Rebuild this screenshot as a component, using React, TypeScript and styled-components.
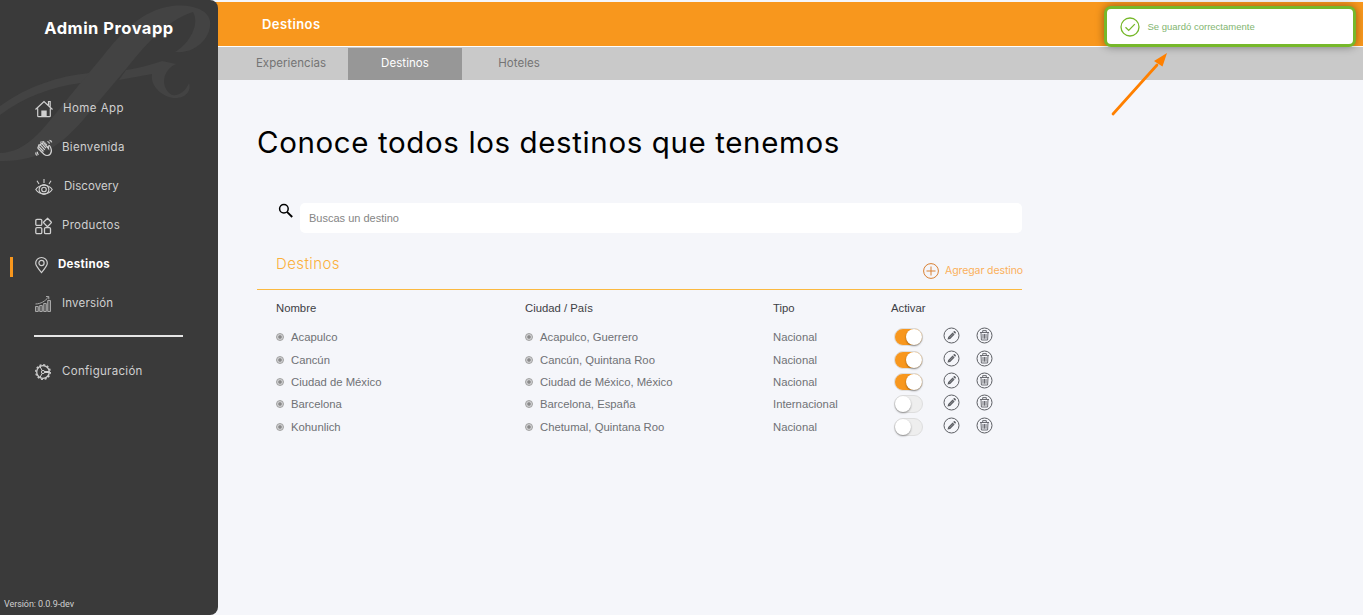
import { ReactNode, useState } from "react";
import styled, { createGlobalStyle } from "styled-components";

interface MenuItem {
  key: string;
  label: string;
  gap: number;
  spacing?: number;
  icon: ReactNode;
}

interface Destino {
  nombre: string;
  ciudad: string;
  tipo: string;
  activo: boolean;
}

const HomeIcon = () => (
  <MenuIcon viewBox="0 0 18 18" $stroke={1.2}>
    <path d="M.5 9.500 9 1.500l8.500 8M2.700 8.500v7.300c0 .6.3.9.9.9h10.800c.6 0 .9-.3.9-.9V8.500M13.500 5V1.500h1.700v5.200" />
    <path d="M6.300 10.500h5.400v6.200H6.300z" fill="#d0d0d0" stroke="none" />
  </MenuIcon>
);

const HandIcon = () => (
  <MenuIcon viewBox="0 0 18 18" $stroke={1.2}>
    <path d="M9 15.200c2 1.700 4.800 1.500 6.300-.2 1.400-1.600 1.400-3.500.7-5.500l-1-2.200c-.7-1.200-2-.6-1.700.6l.2 1.600L9 4.200C8 3.200 6.800 4 7.500 5.200M3.200 9.500 9 15.200M7.500 5.200l3.500 4M7.500 5.200C6.300 4 5 5 5.800 6.300l4 4.500M5.500 6.200C4.200 5.500 3.300 6.700 4.200 7.900l4.300 4.600M4.200 7.900c-1.200-.2-1.800.9-1 1.800" />
    <path d="M4 5.200 3.200 8M5 3.300l4-.8 3 3.500" strokeWidth=".9" />
    <path d="M12.300 2.500c1.300.1 2 .9 2.200 2.100M14.500 1.300c1.200.2 2 .9 2.200 2M2.500 12.700c-.4 1.300 0 2.200 1 3M1 13.500c-.4 1.300.100 2.400 1.300 3" />
  </MenuIcon>
);

const EyeIcon = () => (
  <MenuIcon viewBox="0 0 18 18" $stroke={1.1}>
    <path d="M.8 11.500C4.500 5.800 13.500 5.800 17.200 11.500 13.500 17.200 4.500 17.200.8 11.500z" />
    <circle cx="9" cy="11.500" r="4.900" />
    <circle cx="9" cy="11.500" r="2.300" />
    <path d="M9 1v4M2 2.800l2 3.200M16 2.800l-2 3.200" />
  </MenuIcon>
);

const GridIcon = () => (
  <MenuIcon viewBox="0 0 18 18" $stroke={1.3}>
    <rect x=".8" y="2.400" width="6" height="6" rx="1.200" />
    <rect x=".8" y="10.600" width="6" height="6" rx="1.200" />
    <rect x="9.500" y="10.600" width="6" height="6" rx="1.200" />
    <path d="m12.500 1.300 3.700 3.700c.3.3.3.6 0 .9l-3.300 3.300c-.3.3-.6.3-.9 0L8.700 5.900c-.3-.3-.3-.6 0-.9z" />
  </MenuIcon>
);

const PinIcon = () => (
  <MenuIcon viewBox="0 0 18 18" $stroke={1.2}>
    <path d="M6.500 16.600C3 12.500.700 9.700.700 7.300a5.800 5.800 0 0 1 11.600 0c0 2.400-2.300 5.200-5.800 9.300z" />
    <circle cx="6.500" cy="7" r="2.600" />
  </MenuIcon>
);

const ChartIcon = () => (
  <MenuIcon viewBox="0 0 18 18">
    <g stroke="#a8a8a8">
      <path d="M.5 16.500v-5h2.800v5zM4.700 16.500v-6h2.600v6zM8.700 16.500V8.500h2.600v8zM12.700 16.500v-11h2.800v11z" fill="#5c5c5c" />
      <path d="M.5 9C6 8.800 10 6.300 13.500 2M11 1.500h2.800v2.800" />
    </g>
  </MenuIcon>
);

const GearIcon = () => (
  <MenuIcon viewBox="0 0 18 18">
    <circle cx="8" cy="9" r="6.300" strokeWidth="1.300" />
    <circle cx="8" cy="9" r="7.300" strokeWidth="1.300" strokeDasharray="2 1.822" />
    <circle cx="8" cy="9" r="1.600" />
    <path d="M9.500 8.500h5M9.500 9.500h5M7.200 7.600 5 3.600M7.200 10.400 5 14.400" />
  </MenuIcon>
);

const SearchIcon = () => (
  <svg width="16" height="16" viewBox="0 0 16 16" fill="none" stroke="#000">
    <circle cx="5.900" cy="5.700" r="4.300" strokeWidth="1.500" />
    <path d="m9 8.800 5.200 5.200" strokeWidth="1.900" />
  </svg>
);

const AddIcon = () => (
  <svg width="16" height="16" viewBox="0 0 16 16" fill="none" stroke="#d98032" strokeWidth="1">
    <circle cx="8" cy="8" r="7.400" />
    <path d="M8 3.500v9M3.500 8h9" />
  </svg>
);

const EditIcon = () => (
  <svg width="17" height="17" viewBox="0 0 17 17" fill="none">
    <circle cx="8.500" cy="8.500" r="7.500" stroke="#5d5f64" />
    <path d="m4.500 12.600.700-2.700 4.400-4.400 2 2-4.400 4.400zM10.200 4.900l.800-.800c.6-.5 2.400 1.200 1.900 1.900l-.800.800z" fill="#5d5f64" />
    <path d="m6.500 10.700 3.500-3.500" stroke="#b5b6ba" strokeWidth=".5" />
  </svg>
);

const TrashIcon = () => (
  <svg width="17" height="17" viewBox="0 0 17 17" fill="none" stroke="#5d5f64">
    <circle cx="8.500" cy="8.500" r="7.500" />
    <path d="M4 5.500h9M6.700 5.300V3.600h3.600v1.700M5 5.700l.4 7.300h6.200l.4-7.300M7 7v4.700M8.500 7v4.700M10 7v4.700" strokeWidth=".9" />
  </svg>
);

const CheckIcon = () => (
  <svg width="20" height="20" viewBox="0 0 20 20" fill="none" stroke="#76b82a" strokeWidth="1.300">
    <circle cx="10" cy="10" r="9" />
    <path d="m5.500 10.200 3.200 3.200 6.100-6.300" />
  </svg>
);

const MENU: MenuItem[] = [
  { key: "home", label: "Home App", gap: 10, spacing: 0.45, icon: <HomeIcon /> },
  { key: "bienvenida", label: "Bienvenida", gap: 9, icon: <HandIcon /> },
  { key: "discovery", label: "Discovery", gap: 11, spacing: 0.05, icon: <EyeIcon /> },
  { key: "productos", label: "Productos", gap: 9, icon: <GridIcon /> },
  { key: "destinos", label: "Destinos", gap: 6, icon: <PinIcon /> },
  { key: "inversion", label: "Inversión", gap: 9, spacing: 0.2, icon: <ChartIcon /> },
];

const TABS = ["Experiencias", "Destinos", "Hoteles"];

const DESTINOS: Destino[] = [
  { nombre: "Acapulco", ciudad: "Acapulco, Guerrero", tipo: "Nacional", activo: true },
  { nombre: "Cancún", ciudad: "Cancún, Quintana Roo", tipo: "Nacional", activo: true },
  { nombre: "Ciudad de México", ciudad: "Ciudad de México, México", tipo: "Nacional", activo: true },
  { nombre: "Barcelona", ciudad: "Barcelona, España", tipo: "Internacional", activo: false },
  { nombre: "Kohunlich", ciudad: "Chetumal, Quintana Roo", tipo: "Nacional", activo: false },
];

function Sidebar() {
  return (
    <SideBox>
      <Swirl viewBox="0 0 218 170">
        <path d="M0 161C38 162 62 146 88 114L126 69C142 49 166 20 193 12 200 24 190 43 175 52 198 54 212 35 210 21 208 9 190 4 172 6 142 10 122 32 103 56L88 74C66 100 50 122 38 134 25 147 12 153 0 153z" />
        <path d="M0 106C28 86 58 76 90 73L81 83C50 87 22 98 0 115z" />
        <path d="M126 70 119 80 152 74C150 88 165 98 175 98 188 98 191 89 189 83 186 91 179 96 172 95 160 88 162 70 176 64L162 61C150 65 140 68 126 70z" />
      </Swirl>
      <Brand>Admin Provapp</Brand>
      <Menu>
        {MENU.map((item) => (
          <MenuRow key={item.key} $active={item.key === "destinos"} $gap={item.gap} $spacing={item.spacing}>
            {item.icon}
            <span>{item.label}</span>
          </MenuRow>
        ))}
      </Menu>
      <Divider />
      <MenuRow $gap={9}>
        <GearIcon />
        <span>Configuración</span>
      </MenuRow>
      <Version>Versión: 0.0.9-dev</Version>
    </SideBox>
  );
}

function App() {
  const [destinos, setDestinos] = useState(DESTINOS);
  const [search, setSearch] = useState("");

  const toggle = (nombre: string) => {
    setDestinos(destinos.map((d) => (d.nombre === nombre ? { ...d, activo: !d.activo } : d)));
  };

  const visible = destinos.filter((d) => d.nombre.toLowerCase().includes(search.toLowerCase()));

  return (
    <>
      <GlobalStyle />
      <Page>
        <Sidebar />
        <Main>
          <Header>Destinos</Header>
          <TabBar>
            {TABS.map((tab) => (
              <Tab key={tab} $active={tab === "Destinos"}>{tab}</Tab>
            ))}
          </TabBar>
          <Content>
            <Title>Conoce todos los destinos que tenemos</Title>
            <SearchRow>
              <SearchIcon />
              <SearchInput placeholder="Buscas un destino" value={search} onChange={(e) => setSearch(e.target.value)} />
            </SearchRow>
            <SectionHead>
              <SectionTitle>Destinos</SectionTitle>
              <AddButton>
                <AddIcon />
                <span>Agregar destino</span>
              </AddButton>
            </SectionHead>
            <TableHead>
              <span>Nombre</span>
              <span>Ciudad / País</span>
              <span>Tipo</span>
              <span>Activar</span>
            </TableHead>
            {visible.map((d) => (
              <TableRow key={d.nombre}>
                <Cell><Bullet />{d.nombre}</Cell>
                <Cell><Bullet />{d.ciudad}</Cell>
                <Cell>{d.tipo}</Cell>
                <Actions>
                  <Switch $on={d.activo} onClick={() => toggle(d.nombre)} />
                  <IconButton><EditIcon /></IconButton>
                  <IconButton><TrashIcon /></IconButton>
                </Actions>
              </TableRow>
            ))}
          </Content>
        </Main>
      </Page>
      <Toast>
        <CheckIcon />
        Se guardó correctamente
      </Toast>
      <Arrow viewBox="0 0 60 66">
        <path d="M4 62 48 13" stroke="#ff8000" strokeWidth="2.700" strokeLinecap="round" />
        <path d="M58 1 53.500 14.500 49.500 12 45 9z" fill="#ff8000" />
      </Arrow>
    </>
  );
}

export default App;

const GlobalStyle = createGlobalStyle`
  * {
    box-sizing: border-box;
  }

  body {
    margin: 0;
    background-color: #f5f6fa;
    font-family: Inter, "Liberation Sans", sans-serif;
    overflow: hidden;
  }

  button {
    padding: 0;
    border: none;
    background: none;
    font: inherit;
    cursor: pointer;
  }
`;

const Page = styled.div`
  display: flex;
  height: 615px;
`;

const SideBox = styled.aside`
  position: relative;
  display: flex;
  flex-direction: column;
  flex: none;
  width: 218px;
  height: 100%;
  background-color: #3a3a3a;
  border-radius: 0 8px 8px 0;
`;

const Swirl = styled.svg`
  position: absolute;
  top: 0;
  left: 0;
  width: 218px;
  height: 170px;
  fill: #434343;
`;

const Brand = styled.h1`
  position: relative;
  margin: 18px 0 50px;
  height: 20px;
  color: #ffffff;
  font-size: 16.5px;
  font-weight: 700;
  line-height: 20px;
  letter-spacing: 0.5px;
  text-align: center;
`;

const Menu = styled.nav`
  display: flex;
  flex-direction: column;
  position: relative;
`;

const MenuRow = styled.a<{ $active?: boolean; $gap: number; $spacing?: number }>`
  display: flex;
  align-items: center;
  gap: ${({ $gap }) => $gap}px;
  height: 39px;
  padding-left: ${({ $active }) => ($active ? 10 : 35)}px;
  color: ${({ $active }) => ($active ? "#ffffff" : "#d0d0d0")};
  font-size: 11.5px;
  font-weight: ${({ $active }) => ($active ? 700 : 400)};
  line-height: 14px;
  letter-spacing: ${({ $spacing = 0.3 }) => $spacing}px;
  cursor: pointer;

  &::before {
    content: "";
    display: ${({ $active }) => ($active ? "block" : "none")};
    width: 3px;
    height: 20px;
    margin: 6px 16px 0 0;
    background-color: #f8971d;
  }

  svg {
    margin-top: 2px;
    margin-right: ${({ $active }) => ($active ? -1 : 0)}px;
  }
`;

const MenuIcon = styled.svg<{ $stroke?: number }>`
  flex: none;
  width: 18px;
  height: 18px;
  fill: none;
  stroke: #d0d0d0;
  stroke-width: ${({ $stroke = 1 }) => $stroke};
`;

const Divider = styled.hr`
  width: 149px;
  height: 2px;
  margin: 13px 0 14px 34px;
  border: none;
  background-color: #e6e6e6;
`;

const Version = styled.p`
  margin: auto 0 5px 4px;
  color: #d0d0d0;
  font-family: Roboto, sans-serif;
  font-size: 9px;
  line-height: 12px;
  letter-spacing: -0.07px;
`;

const Main = styled.main`
  flex: 1;
  padding-top: 2px;
`;

const Header = styled.header`
  height: 45px;
  margin-left: -8px;
  padding: 13px 52px;
  border-bottom: 1px solid #ffffff;
  background-color: #f8971d;
  color: #ffffff;
  font-size: 13px;
  font-weight: 600;
  line-height: 19px;
  letter-spacing: 0.4px;
`;

const TabBar = styled.div`
  display: flex;
  height: 33px;
  padding: 1px 0 0 16px;
  background-color: #c9c9c9;
`;

const Tab = styled.button<{ $active: boolean }>`
  width: 114px;
  height: 32px;
  padding-bottom: 2px;
  background-color: ${({ $active }) => ($active ? "#979797" : "transparent")};
  color: ${({ $active }) => ($active ? "#ffffff" : "#747474")};
  font-size: 11.5px;
  letter-spacing: 0.05px;
`;

const Content = styled.section`
  width: 765px;
  margin-left: 39px;
`;

const Title = styled.h2`
  margin: 0;
  padding: 43px 0 42px;
  color: #000000;
  font-size: 29.5px;
  font-weight: 400;
  line-height: 38px;
  letter-spacing: 0.62px;
  white-space: nowrap;
`;

const SearchRow = styled.div`
  display: flex;
  gap: 6px;
  padding-left: 21px;
`;

const SearchInput = styled.input`
  flex: 1;
  height: 30px;
  padding: 0 9px;
  border: none;
  border-radius: 5px;
  background-color: #ffffff;
  font-family: "Liberation Sans", sans-serif;
  font-size: 11px;
  outline: none;

  &::placeholder {
    color: #858585;
  }
`;

const SectionHead = styled.div`
  display: flex;
  justify-content: space-between;
  height: 57px;
  padding: 21px 0 0 19px;
  border-bottom: 1px solid #fbb940;
`;

const SectionTitle = styled.h3`
  margin: 0;
  color: #fbb03b;
  font-size: 15px;
  font-weight: 300;
  line-height: 20px;
  letter-spacing: 0.4px;
`;

const AddButton = styled.button`
  display: flex;
  align-items: center;
  gap: 6px;
  height: 34px;
  margin-right: -1px;
  color: #fbb05b;
  font-size: 10.5px;
  letter-spacing: -0.1px;

  span {
    margin-top: -2px;
  }
`;

const TableHead = styled.div`
  display: grid;
  grid-template-columns: 249px 248px 118px 1fr;
  height: 36px;
  padding: 11px 0 0 19px;
  color: #3d4045;
  font-family: "Liberation Sans", sans-serif;
  font-size: 11.3px;
  line-height: 14px;
`;

const TableRow = styled.div`
  display: grid;
  grid-template-columns: 249px 248px 121px 1fr;
  align-items: center;
  height: 22.35px;
  padding-left: 19px;
`;

const Cell = styled.div`
  display: flex;
  align-items: center;
  color: #6f7175;
  font-family: "Liberation Sans", sans-serif;
  font-size: 11.3px;
  line-height: 14px;
`;

const Bullet = styled.i`
  width: 8px;
  height: 8px;
  margin-right: 7px;
  border: 1px solid #a0a0a0;
  border-radius: 50%;
  background: radial-gradient(circle, #8a8a8a 0 1.3px, #d0d0d2 2.2px);
`;

const Actions = styled.div`
  display: flex;
  align-items: center;
`;

const Switch = styled.button<{ $on: boolean }>`
  display: flex;
  justify-content: ${({ $on }) => ($on ? "flex-end" : "flex-start")};
  width: 29px;
  height: 18px;
  margin-right: 19.5px;
  border: 1px solid #dedede;
  border-radius: 9px;
  background-color: ${({ $on }) => ($on ? "#f8971d" : "#eeeeee")};

  &::after {
    content: "";
    width: 16px;
    height: 16px;
    border-radius: 50%;
    background-color: #ffffff;
    box-shadow: 0 1px 2px rgba(0, 0, 0, 0.4);
  }
`;

const IconButton = styled.button`
  display: flex;
  margin: 0 16px 3px 0;
`;

const Toast = styled.div`
  position: absolute;
  top: 6px;
  left: 1104px;
  display: flex;
  align-items: center;
  gap: 8px;
  width: 252px;
  height: 41px;
  padding-left: 12.5px;
  border: 3px solid #76b82a;
  border-radius: 7px;
  background-color: #ffffff;
  box-shadow: 0 0 8px rgba(0, 0, 0, 0.4);
  color: #82b570;
  font-family: "Liberation Sans", sans-serif;
  font-size: 9.5px;
`;

const Arrow = styled.svg`
  position: absolute;
  top: 52px;
  left: 1109px;
  width: 60px;
  height: 66px;
  fill: none;
`;
